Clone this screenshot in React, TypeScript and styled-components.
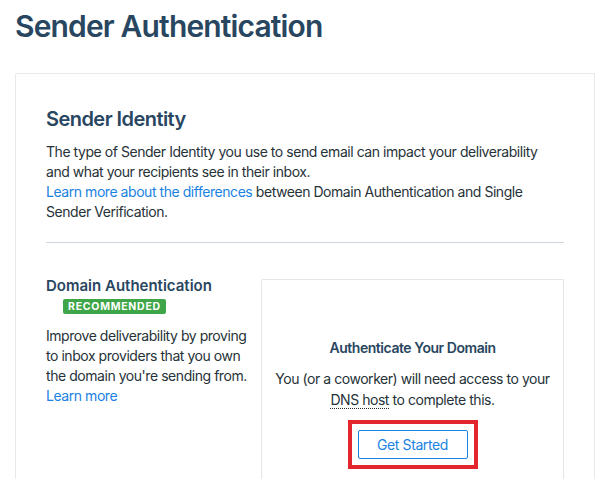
import React from "react";
import styled, { createGlobalStyle } from "styled-components";

const GlobalStyle = createGlobalStyle`
  html, body {
    margin: 0;
    padding: 0;
    background: #ffffff;
  }
  body {
    font-family: Inter, "Noto Sans", "Liberation Sans", sans-serif;
    color: #263238;
    -webkit-font-smoothing: antialiased;
  }
`;

const Page = styled.div`
  padding: 0 15px;
`;

const PageTitle = styled.h1`
  margin: 8px 0 29px;
  font-size: 30px;
  line-height: 36px;
  font-weight: 600;
  letter-spacing: -0.85px;
  color: #294661;
`;

const Card = styled.section`
  border: 1px solid #e6e9ed;
  border-bottom: none;
  border-radius: 2px 2px 0 0;
  padding: 33px 30px 0;
  min-height: 420px;
`;

const SectionTitle = styled.h2`
  margin: 0;
  font-size: 20px;
  line-height: 24px;
  font-weight: 600;
  letter-spacing: -0.55px;
  color: #294661;
`;

const Paragraph = styled.p<{ $mt?: number }>`
  margin: ${(p) => p.$mt ?? 0}px 0 0;
  font-size: 14px;
  line-height: 20px;
  letter-spacing: -0.45px;
  color: #263238;
`;

const Link = styled.a`
  color: #1a82e2;
  text-decoration: none;
  cursor: pointer;
`;

const Divider = styled.hr`
  margin: 20px 0 0;
  border: none;
  border-top: 1px solid #cdd6de;
  height: 0;
`;

const Options = styled.div`
  display: grid;
  grid-template-columns: 206px 1fr;
  column-gap: 9px;
  margin-top: 33px;
  align-items: start;
`;

const OptionInfo = styled.div`
  display: flex;
  flex-direction: column;
  align-items: flex-start;
`;

const OptionTitle = styled.h3`
  margin: 0;
  font-size: 15px;
  line-height: 20px;
  font-weight: 600;
  color: #294661;
`;

const Badge = styled.span`
  margin: 3px 0 0 17px;
  padding: 0 5px;
  height: 15px;
  line-height: 15px;
  font-size: 10.5px;
  font-weight: 700;
  letter-spacing: 0.75px;
  color: #ffffff;
  background: #3ea648;
  border-radius: 2px;
`;

const ActionCard = styled.div`
  margin-top: 3px;
  border: 1px solid #e2e6ea;
  border-bottom: none;
  border-radius: 2px 2px 0 0;
  padding: 58px 0 30px;
  min-height: 240px;
  display: flex;
  flex-direction: column;
  align-items: center;
  text-align: center;
`;

const ActionTitle = styled.h4`
  margin: 0;
  font-size: 14px;
  line-height: 20px;
  font-weight: 600;
  letter-spacing: -0.45px;
  color: #294661;
`;

const ActionText = styled.p`
  margin: 10px 0 0;
  font-size: 14px;
  line-height: 21px;
  letter-spacing: -0.45px;
  color: #263238;
  white-space: nowrap;
`;

const Dotted = styled.span`
  border-bottom: 1px dotted #263238;
`;

const Highlight = styled.div`
  margin-top: 10px;
  border: 4px solid #e3262d;
  padding: 6px;
  display: inline-flex;
`;

const Button = styled.button`
  font-family: inherit;
  font-size: 14px;
  line-height: 27px;
  height: 29px;
  padding: 0;
  width: 110px;
  letter-spacing: -0.4px;
  color: #1a82e2;
  background: #ffffff;
  border: 1px solid #1a82e2;
  border-radius: 2px;
  cursor: pointer;
`;

export default function App() {
  return (
    <>
      <GlobalStyle />
      <Page>
        <PageTitle>Sender Authentication</PageTitle>
        <Card>
          <SectionTitle>Sender Identity</SectionTitle>
          <Paragraph $mt={11}>
            The type of Sender Identity you use to send email can impact your deliverability
            and what your recipients see in their inbox.
            <br />
            <Link>Learn more about the differences</Link> between Domain Authentication and Single
            Sender Verification.
          </Paragraph>
          <Divider />
          <Options>
            <OptionInfo>
              <OptionTitle>Domain Authentication</OptionTitle>
              <Badge>RECOMMENDED</Badge>
              <Paragraph $mt={12}>
                Improve deliverability by proving to inbox providers that you own the domain
                you're sending from.
                <br />
                <Link>Learn more</Link>
              </Paragraph>
            </OptionInfo>
            <ActionCard>
              <ActionTitle>Authenticate Your Domain</ActionTitle>
              <ActionText>
                You (or a coworker) will need access to your
                <br />
                <Dotted>DNS host</Dotted> to complete this.
              </ActionText>
              <Highlight>
                <Button>Get Started</Button>
              </Highlight>
            </ActionCard>
          </Options>
        </Card>
      </Page>
    </>
  );
}
